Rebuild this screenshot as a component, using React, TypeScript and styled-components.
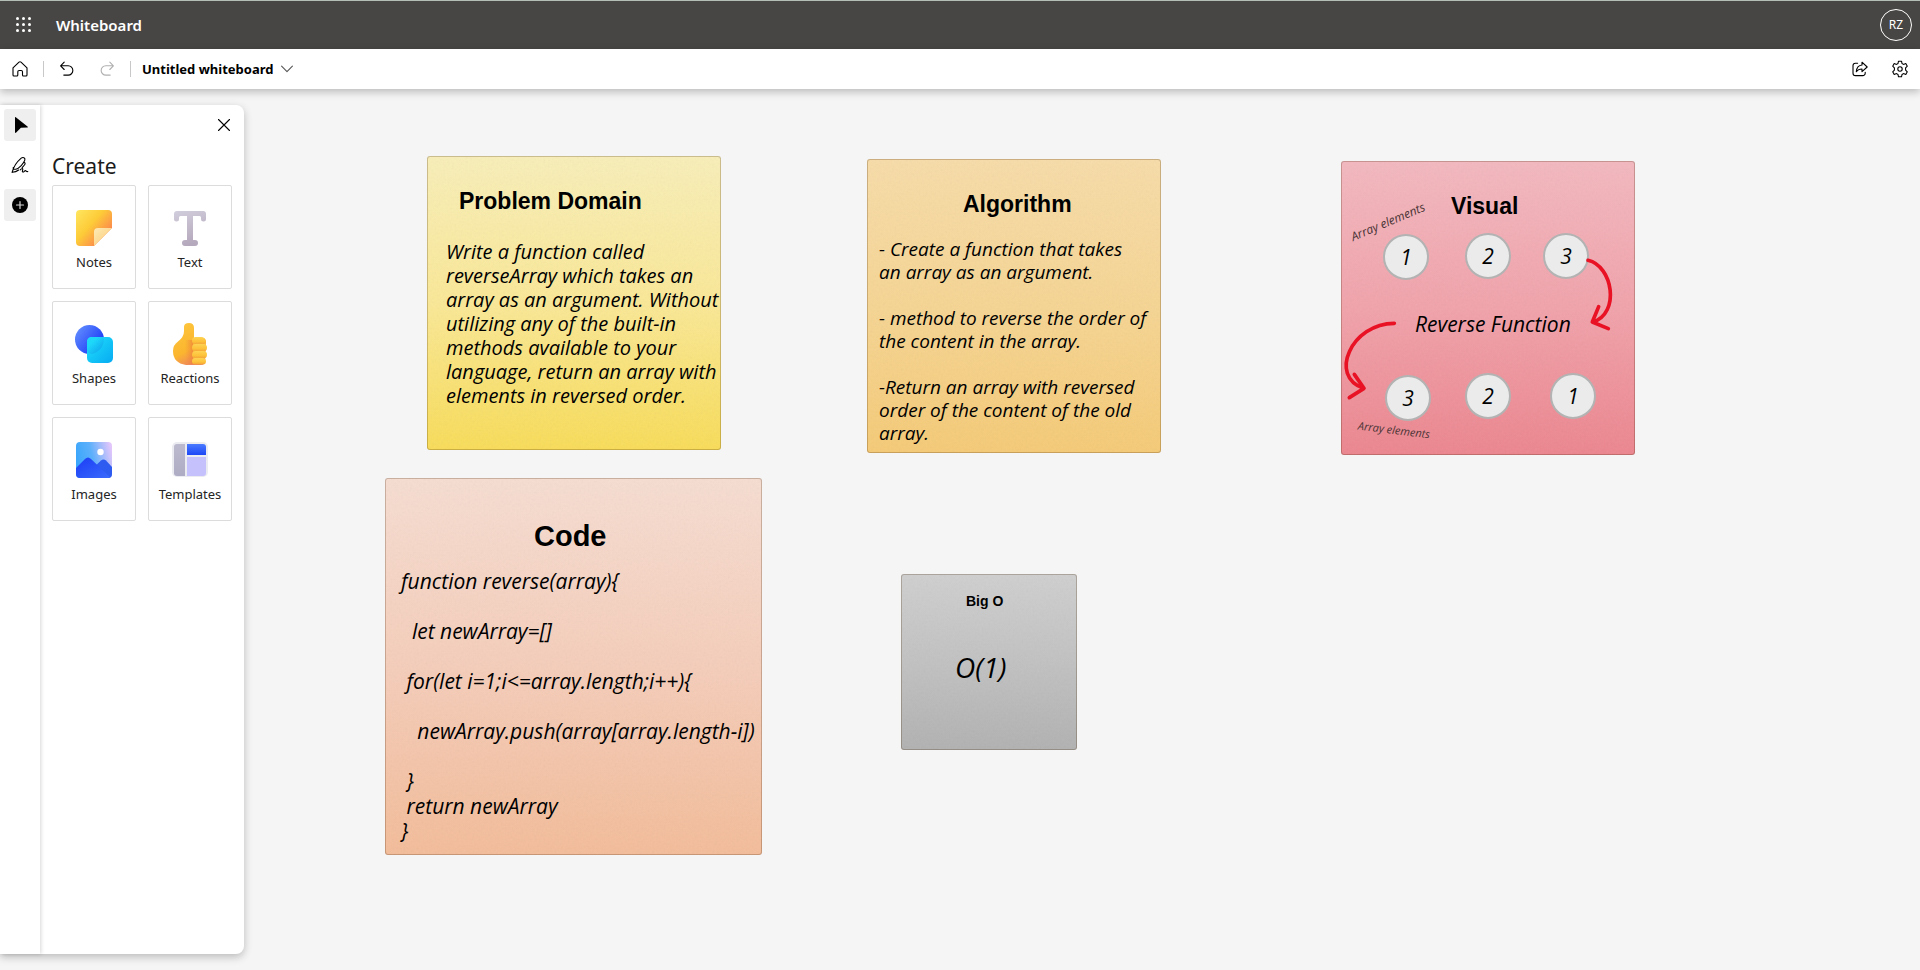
import React from "react";
import styled, { createGlobalStyle } from "styled-components";

const GlobalStyle = createGlobalStyle`
  *, *::before, *::after { box-sizing: border-box; }
  body {
    margin: 0;
    background: #f5f5f5;
    color: #000;
    font-family: "Noto Sans", "Open Sans", sans-serif;
  }
  button { font: inherit; color: inherit; }
`;

/* ---------- Page frame ---------- */

const Page = styled.div`
  min-height: 100vh;
  display: flex;
  flex-direction: column;
`;

const SuiteBar = styled.header`
  display: flex;
  align-items: center;
  height: 49px;
  padding: 0 8px;
  border-top: 1px solid #b4beb7;
  background: #484644;
  color: #fff;
`;

const BrandName = styled.span`
  margin-left: 16px;
  flex: 1;
  font-size: 15px;
  line-height: 24px;
  font-weight: 600;
`;

const IconButton = styled.button<{ $muted?: boolean }>`
  display: flex;
  align-items: center;
  justify-content: center;
  width: 32px;
  height: 32px;
  padding: 0;
  border: 0;
  border-radius: 3px;
  background: transparent;
  color: ${(p) => (p.$muted ? "#b0b0b0" : "inherit")};
  cursor: pointer;
`;

const Avatar = styled.button`
  width: 32px;
  height: 32px;
  padding: 0;
  border: 1px solid #fff;
  border-radius: 50%;
  background: transparent;
  font-size: 12px;
  line-height: 28px;
  cursor: pointer;
`;

const Toolbar = styled.nav`
  position: relative;
  z-index: 2;
  display: flex;
  align-items: center;
  height: 40px;
  padding: 0 4px;
  background: #fff;
  box-shadow: 0 3px 8px rgba(0, 0, 0, 0.24);
`;

const Divider = styled.span`
  width: 1px;
  height: 16px;
  margin: 0 7px;
  background: #c8c8c8;
`;

const BoardName = styled.button`
  display: flex;
  align-items: center;
  gap: 8px;
  margin-right: auto;
  padding: 0 4px;
  border: 0;
  background: transparent;
  font-size: 13px;
  line-height: 24px;
  font-weight: 700;
  cursor: pointer;
`;

const ToolGroup = styled.div`
  display: flex;
  gap: 8px;
`;

const Main = styled.main`
  flex: 1;
  display: flex;
`;

/* ---------- Side panel ---------- */

const SidePanel = styled.aside`
  position: relative;
  z-index: 1;
  flex: none;
  display: flex;
  margin: 16px 0;
  border-radius: 0 8px 8px 0;
  background: #fff;
  box-shadow: 0 3px 8px rgba(0, 0, 0, 0.24);
`;

const Rail = styled.div`
  display: flex;
  flex-direction: column;
  gap: 8px;
  width: 40px;
  padding: 4px;
  box-shadow: 1px 0 4px rgba(0, 0, 0, 0.16);
`;

const RailButton = styled(IconButton)<{ $active?: boolean }>`
  background: ${(p) => (p.$active ? "#efefef" : "transparent")};
`;

const CreatePane = styled.section`
  width: 204px;
  padding: 4px 12px 12px;
`;

const PaneTop = styled.div`
  display: flex;
  justify-content: flex-end;
  margin: 0 -8px;
`;

const PaneTitle = styled.h2`
  margin: 11px 0 5px;
  font-size: 21px;
  line-height: 28px;
  font-weight: 400;
  color: #1b1b1b;
`;

const TileGrid = styled.div`
  display: grid;
  grid-template-columns: 1fr 1fr;
  gap: 12px;
`;

const Tile = styled.button`
  display: flex;
  flex-direction: column;
  align-items: center;
  gap: 3px;
  height: 104px;
  padding: 20px 0 0;
  border: 1px solid #dcdcdc;
  border-radius: 2px;
  background: #fff;
  font-size: 13px;
  line-height: 18px;
  color: #242424;
  cursor: pointer;
`;

/* ---------- Whiteboard canvas ---------- */

const Canvas = styled.div`
  position: relative;
  flex: 1;
  min-height: 800px;
  overflow: hidden;
`;

const tones = {
  yellow: ["#f8eeb8", "#fae896", "#f8dc58"],
  amber: ["#f7dca8", "#f6d593", "#f5ca76"],
  pink: ["#f3b8bf", "#f1a2aa", "#ec858e"],
  peach: ["#f6ddd1", "#f5cdba", "#f3bc99"],
  gray: ["#cfcfcf", "#c1c1c1", "#b1b1b1"],
};

const Note = styled.article<{
  $x: number;
  $y: number;
  $size: number;
  $top: number;
  $tone: keyof typeof tones;
}>`
  position: absolute;
  left: ${(p) => p.$x}px;
  top: ${(p) => p.$y}px;
  width: ${(p) => p.$size}px;
  height: ${(p) => p.$size}px;
  padding-top: ${(p) => p.$top}px;
  border: 1px solid rgba(60, 30, 0, 0.24);
  border-radius: 3px;
  background: linear-gradient(${(p) => tones[p.$tone].join(", ")}) border-box;
`;

const NoteTitle = styled.h3<{ $size: "small" | "medium" | "large"; $indent: number }>`
  position: relative;
  margin: 0;
  padding-left: ${(p) => p.$indent}px;
  font-family: "Liberation Sans", Arial, sans-serif;
  font-weight: 700;
  font-size: ${(p) => ({ small: 14, medium: 23, large: 29 })[p.$size]}px;
  line-height: ${(p) => ({ small: 20, medium: 28, large: 36 })[p.$size]}px;
`;

const Handwriting = styled.p<{ $font: number; $line: number; $indent: number; $gap: number }>`
  position: relative;
  margin: ${(p) => p.$gap}px 0 0;
  padding-left: ${(p) => p.$indent}px;
  font-family: "Ink Free", "Segoe Print", "Open Sans", cursive;
  font-style: italic;
  font-size: ${(p) => p.$font}px;
  line-height: ${(p) => p.$line}px;
  white-space: pre;
`;

const GrainLayer = styled.svg`
  position: absolute;
  inset: 0;
  width: 100%;
  height: 100%;
  opacity: 0.08;
  pointer-events: none;
`;

const Token = styled.span<{ $x: number; $y: number }>`
  position: absolute;
  left: ${(p) => p.$x}px;
  top: ${(p) => p.$y}px;
  width: 46px;
  height: 46px;
  border: 2px solid #b3b3b3;
  border-radius: 50%;
  background: #ebebeb;
  font-family: "Ink Free", "Segoe Print", "Open Sans", cursive;
  font-style: italic;
  font-size: 21px;
  line-height: 42px;
  text-align: center;
`;

const Caption = styled.span<{ $x: number; $y: number; $angle: number; $font: number }>`
  position: absolute;
  left: ${(p) => p.$x}px;
  top: ${(p) => p.$y}px;
  width: 80px;
  text-align: center;
  transform: rotate(${(p) => p.$angle}deg);
  font-family: "Ink Free", "Segoe Print", "Open Sans", cursive;
  font-style: italic;
  font-size: ${(p) => p.$font}px;
  line-height: 16px;
  color: #4a3436;
  white-space: nowrap;
`;

const ArrowLayer = styled.svg`
  position: absolute;
  left: -1px;
  top: -1px;
`;

/* ---------- Icons ---------- */

const line = {
  fill: "none",
  stroke: "currentColor",
  strokeWidth: 1.1,
  strokeLinecap: "round" as const,
  strokeLinejoin: "round" as const,
};

const WaffleIcon = () => (
  <svg width="16" height="16" viewBox="0 0 16 16" fill="currentColor">
    {[1.5, 7.5, 13.5].flatMap((y) =>
      [1.5, 7.5, 13.5].map((x) => <circle key={`${x}-${y}`} cx={x} cy={y} r="1.5" />),
    )}
  </svg>
);

const HomeIcon = () => (
  <svg width="16" height="16" viewBox="0 0 16 16" {...line}>
    <path d="M1 6.9 7 1.1q1-.8 2 0l6 5.8V14q0 1-1 1h-2.6q-.9 0-.9-1v-3.2q0-1.3-1.3-1.3H7.1q-1.3 0-1.3 1.3V14q0 1-.9 1H2q-1 0-1-1z" />
  </svg>
);

const UndoIcon = () => (
  <svg width="16" height="16" viewBox="0 0 16 16" {...line}>
    <path d="M5.2 1.2 1.6 4.8l3.6 3.7M1.8 4.8h7.4a4.6 4.6 0 0 1 0 9.3H4.8" />
  </svg>
);

const RedoIcon = () => (
  <svg width="16" height="16" viewBox="0 0 16 16" {...line}>
    <path d="m10.8 1.2 3.6 3.6-3.6 3.7M14.2 4.8H6.8a4.6 4.6 0 0 0 0 9.3h4.4" />
  </svg>
);

const ChevronIcon = () => (
  <svg width="12" height="12" viewBox="0 0 12 12" {...line} stroke="#555">
    <path d="m.6 3.2 5.4 5.4 5.4-5.4" />
  </svg>
);

const ShareIcon = () => (
  <svg width="16" height="16" viewBox="0 0 16 16" {...line}>
    <path d="M5.6 2.2H3.4A2.4 2.4 0 0 0 1 4.6v7.6a2.4 2.4 0 0 0 2.4 2.4h7.4a2.4 2.4 0 0 0 2.4-2.4v-1" />
    <path d="M10 1.2 15.2 6 10 10.6V8c-2.6 0-4.3.8-5.700 2.7C4.6 7 6.4 4.300 10 4z" />
  </svg>
);

const GearIcon = () => (
  <svg width="18" height="18" viewBox="0 0 18 18" {...line}>
    <path d="M7.5 1.2h3l.5 2.300 1.500.9 2.300-.8 1.500 2.600-1.700 1.700v2.200l1.700 1.700-1.500 2.600-2.300-.8-1.500.9-.5 2.300h-3L7 14.500l-1.500-.9-2.300.8-1.500-2.600 1.700-1.700V7.900L1.700 6.200l1.500-2.600 2.300.8L7 3.500z" />
    <circle cx="9" cy="9" r="2.2" />
  </svg>
);

const PointerIcon = () => (
  <svg width="16" height="18" viewBox="0 0 16 18" fill="currentColor">
    <path d="M3 1.6q0-1 .8-.4l11.700 9.400q.8.8-.3.9l-6.300.3-4.700 4.800q-1.200.9-1.200-.5z" />
  </svg>
);

const PenIcon = () => (
  <svg width="18" height="18" viewBox="0 0 18 18" {...line}>
    <path d="M1.200 16.200C2.200 12 6 5.800 10.200 2.200c1.800-1.500 4.400-.3 3.600 2C12.800 7.300 8.300 12.400 4.800 13.200c-1.600.3-3-.2-2.600-1.600" />
    <path d="M1.200 16.200c2.600 0 4.800-.8 6.400-2.200M13.200 6.200c1.300.6 1 1.800.2 2.800l-2.200 2.600" />
    <path d="M9.200 13.800c1.200-1.300 2.400-1.500 2.600-.6.200 1-1.200 2.500.1 2.800 1.100.2 1.500-1.400 2.500-1.400s.8 1.400 2.400.9" />
  </svg>
);

const AddIcon = () => (
  <svg width="16" height="16" viewBox="0 0 16 16">
    <circle cx="8" cy="8" r="8" fill="currentColor" />
    <path d="M8 4.500v7M4.500 8h7" stroke="#d8d8d8" strokeWidth="1.2" strokeLinecap="round" />
  </svg>
);

const CloseIcon = () => (
  <svg width="12" height="12" viewBox="0 0 12 12" {...line}>
    <path d="m.5.5 11 11M11.500.5l-11 11" />
  </svg>
);

const NotesArt = () => (
  <svg width="44" height="44" viewBox="0 0 44 44">
    <defs>
      <linearGradient id="noteBody" x1="0.05" y1="0.05" x2="0.9" y2="0.8">
        <stop offset="0" stopColor="#ffe35b" />
        <stop offset="0.45" stopColor="#fdcb38" />
        <stop offset="1" stopColor="#fb7a52" />
      </linearGradient>
      <linearGradient id="noteFold" x1="0" y1="0" x2="0.6" y2="0.6">
        <stop offset="0" stopColor="#fdebb8" />
        <stop offset="1" stopColor="#fcd68a" />
      </linearGradient>
    </defs>
    <path d="M8 4h28a4 4 0 0 1 4 4v14L22 40H8a4 4 0 0 1-4-4V8a4 4 0 0 1 4-4z" fill="url(#noteBody)" />
    <path d="M40 22 22 40V26a4 4 0 0 1 4-4z" fill="url(#noteFold)" />
  </svg>
);

const TextArt = () => (
  <svg width="44" height="44" viewBox="0 0 44 44">
    <defs>
      <linearGradient id="textStem" x1="0" y1="0" x2="0.3" y2="1">
        <stop offset="0" stopColor="#d2cedc" />
        <stop offset="1" stopColor="#b5a9bd" />
      </linearGradient>
    </defs>
    <path
      d="M9 5h26a3 3 0 0 1 3 3v5a2.500 2.500 0 0 1-5 0v-1.500q0-1.500-1.500-1.500H25v24h2a3 3 0 0 1 0 6H17a3 3 0 0 1 0-6h2V10h-6.500Q11 10 11 11.500V13a2.500 2.500 0 0 1-5 0V8a3 3 0 0 1 3-3z"
      fill="url(#textStem)"
    />
  </svg>
);

const ShapesArt = () => (
  <svg width="44" height="44" viewBox="0 0 44 44">
    <defs>
      <linearGradient id="shapeDisc" x1="0.1" y1="0.2" x2="0.9" y2="0.8">
        <stop offset="0" stopColor="#5c86ff" />
        <stop offset="1" stopColor="#1636f4" />
      </linearGradient>
      <linearGradient id="shapeSquare" x1="0" y1="0" x2="1" y2="1">
        <stop offset="0" stopColor="#22e2fb" />
        <stop offset="1" stopColor="#06aaf2" />
      </linearGradient>
      <linearGradient id="shapeLens" x1="0" y1="0" x2="1" y2="1">
        <stop offset="0.3" stopColor="#1ed8fa" />
        <stop offset="1" stopColor="#0b9cec" />
      </linearGradient>
    </defs>
    <circle cx="17.500" cy="17.500" r="14.500" fill="url(#shapeDisc)" />
    <rect x="15" y="15" width="26" height="26" rx="5" fill="url(#shapeSquare)" />
    <path d="M31.700 15a14.500 14.500 0 0 1-13 16.900Q15 30 15 27v-7q0-5 5-5z" fill="url(#shapeLens)" />
  </svg>
);

const ReactionsArt = () => (
  <svg width="44" height="44" viewBox="0 0 44 44">
    <defs>
      <linearGradient id="thumbHand" x1="0.2" y1="0" x2="0.6" y2="1">
        <stop offset="0" stopColor="#fdc63c" />
        <stop offset="0.65" stopColor="#fbb52f" />
        <stop offset="1" stopColor="#ee8560" />
      </linearGradient>
      <linearGradient id="thumbShade" x1="0" y1="0" x2="1" y2="0">
        <stop offset="0" stopColor="#f08a3c" stopOpacity="0" />
        <stop offset="1" stopColor="#ee7f3c" stopOpacity="0.7" />
      </linearGradient>
      <linearGradient id="thumbFinger" x1="0" y1="0" x2="0" y2="1">
        <stop offset="0" stopColor="#fed353" />
        <stop offset="0.6" stopColor="#fdc23a" />
        <stop offset="1" stopColor="#f3a33a" />
      </linearGradient>
    </defs>
    <path
      d="M16 5q0-4 5-4t5 5v10h9q3 0 3 4l-1 19q0 4-4 4H18Q5 41 5 29q0-6 5-9.500 6-4.500 6-10.500z"
      fill="url(#thumbHand)"
    />
    <path d="M17 18h8v24h-8z" fill="url(#thumbShade)" />
    <g fill="url(#thumbFinger)">
      <rect x="24" y="15" width="13" height="7.500" rx="3.700" />
      <rect x="24" y="22" width="15" height="7.500" rx="3.700" />
      <rect x="24" y="29" width="15" height="7.500" rx="3.700" />
      <rect x="24" y="36" width="14" height="6.500" rx="3.200" />
    </g>
  </svg>
);

const ImagesArt = () => (
  <svg width="44" height="44" viewBox="0 0 44 44">
    <defs>
      <linearGradient id="imageSky" x1="0" y1="0.5" x2="1" y2="0.25">
        <stop offset="0" stopColor="#3aa6fb" />
        <stop offset="0.45" stopColor="#5cb0fb" />
        <stop offset="1" stopColor="#e2c6fb" />
      </linearGradient>
      <linearGradient id="imageHill" x1="0" y1="0" x2="1" y2="1">
        <stop offset="0" stopColor="#1a3cf6" />
        <stop offset="1" stopColor="#3c6dfc" />
      </linearGradient>
      <clipPath id="imageFrame">
        <rect x="4" y="4" width="36" height="36" rx="4" />
      </clipPath>
    </defs>
    <g clipPath="url(#imageFrame)">
      <rect x="4" y="4" width="36" height="36" fill="url(#imageSky)" />
      <path d="M20 31 29 22.500q2.500-2 5 0L42 31v11H20z" fill="#2e5bf0" />
      <path d="M3 31 13 21q3-3 6 0l21 20H3z" fill="url(#imageHill)" />
      <circle cx="28.500" cy="14" r="3.200" fill="#fff" />
    </g>
  </svg>
);

const TemplatesArt = () => (
  <svg width="44" height="44" viewBox="0 0 44 44">
    <defs>
      <linearGradient id="templateHead" x1="0" y1="0" x2="0" y2="1">
        <stop offset="0" stopColor="#4a7bff" />
        <stop offset="1" stopColor="#1d47f6" />
      </linearGradient>
      <linearGradient id="templateSide" x1="0" y1="0" x2="0" y2="1">
        <stop offset="0" stopColor="#bcbacd" />
        <stop offset="1" stopColor="#adacc4" />
      </linearGradient>
    </defs>
    <rect x="4" y="4" width="36" height="35" rx="5" fill="#ebebf2" />
    <path d="M9 6h8v32H9a3 3 0 0 1-3-3V9a3 3 0 0 1 3-3z" fill="url(#templateSide)" />
    <path d="M19 6h16a3 3 0 0 1 3 3v8H19z" fill="url(#templateHead)" />
    <path d="M19 19h19v16a3 3 0 0 1-3 3H19z" fill="#c4c1fd" />
  </svg>
);

const Grain = () => (
  <GrainLayer aria-hidden="true">
    <filter id="paperGrain">
      <feTurbulence type="fractalNoise" baseFrequency="0.45" numOctaves="2" seed="4" />
      <feColorMatrix type="saturate" values="0" />
    </filter>
    <rect width="100%" height="100%" filter="url(#paperGrain)" />
  </GrainLayer>
);

/* ---------- Content ---------- */

const tiles = [
  { label: "Notes", Art: NotesArt },
  { label: "Text", Art: TextArt },
  { label: "Shapes", Art: ShapesArt },
  { label: "Reactions", Art: ReactionsArt },
  { label: "Images", Art: ImagesArt },
  { label: "Templates", Art: TemplatesArt },
];

const tokens = [
  { value: "1", x: 41, y: 72 },
  { value: "2", x: 123, y: 71 },
  { value: "3", x: 201, y: 71 },
  { value: "3", x: 43, y: 213 },
  { value: "2", x: 123, y: 211 },
  { value: "1", x: 208, y: 211 },
];

const problemText = `Write a function called
reverseArray which takes an
array as an argument. Without
utilizing any of the built-in
methods available to your
language, return an array with
elements in reversed order.`;

const algorithmText = `- Create a function that takes
an array as an argument.

- method to reverse the order of
the content in the array.

-Return an array with reversed
order of the content of the old
array.`;

const codeText = `function reverse(array){

  let newArray=[]

 for(let i=1;i<=array.length;i++){

   newArray.push(array[array.length-i])

 }
 return newArray
}`;

export default function App() {
  return (
    <Page>
      <GlobalStyle />
      <SuiteBar>
        <IconButton aria-label="App launcher">
          <WaffleIcon />
        </IconButton>
        <BrandName>Whiteboard</BrandName>
        <Avatar aria-label="Account">RZ</Avatar>
      </SuiteBar>

      <Toolbar>
        <IconButton aria-label="Home">
          <HomeIcon />
        </IconButton>
        <Divider />
        <ToolGroup>
          <IconButton aria-label="Undo">
            <UndoIcon />
          </IconButton>
          <IconButton aria-label="Redo" $muted>
            <RedoIcon />
          </IconButton>
        </ToolGroup>
        <Divider />
        <BoardName>
          Untitled whiteboard
          <ChevronIcon />
        </BoardName>
        <ToolGroup>
          <IconButton aria-label="Share">
            <ShareIcon />
          </IconButton>
          <IconButton aria-label="Settings">
            <GearIcon />
          </IconButton>
        </ToolGroup>
      </Toolbar>

      <Main>
        <SidePanel>
          <Rail>
            <RailButton aria-label="Select" $active>
              <PointerIcon />
            </RailButton>
            <RailButton aria-label="Inking">
              <PenIcon />
            </RailButton>
            <RailButton aria-label="Create" $active>
              <AddIcon />
            </RailButton>
          </Rail>
          <CreatePane>
            <PaneTop>
              <IconButton aria-label="Close">
                <CloseIcon />
              </IconButton>
            </PaneTop>
            <PaneTitle>Create</PaneTitle>
            <TileGrid>
              {tiles.map(({ label, Art }) => (
                <Tile key={label}>
                  <Art />
                  {label}
                </Tile>
              ))}
            </TileGrid>
          </CreatePane>
        </SidePanel>

        <Canvas>
          <Note $x={183} $y={67} $size={294} $top={30} $tone="yellow">
            <Grain />
            <NoteTitle $size="medium" $indent={31}>
              Problem Domain
            </NoteTitle>
            <Handwriting $font={20} $line={24} $indent={18} $gap={25}>
              {problemText}
            </Handwriting>
          </Note>

          <Note $x={623} $y={70} $size={294} $top={30} $tone="amber">
            <Grain />
            <NoteTitle $size="medium" $indent={95}>
              Algorithm
            </NoteTitle>
            <Handwriting $font={19} $line={23} $indent={11} $gap={20}>
              {algorithmText}
            </Handwriting>
          </Note>

          <Note $x={1097} $y={72} $size={294} $top={30} $tone="pink">
            <Grain />
            <NoteTitle $size="medium" $indent={109}>
              Visual
            </NoteTitle>
            <Handwriting $font={21} $line={28} $indent={73} $gap={90}>
              Reverse Function
            </Handwriting>
            {tokens.map((t) => (
              <Token key={`${t.x}-${t.y}`} $x={t.x} $y={t.y}>
                {t.value}
              </Token>
            ))}
            <Caption $x={6} $y={52} $angle={-23} $font={12}>
              Array elements
            </Caption>
            <Caption $x={12} $y={260} $angle={7} $font={11}>
              Array elements
            </Caption>
            <ArrowLayer
              width="294"
              height="294"
              viewBox="34 33 882 882"
              fill="none"
              stroke="#e81224"
              strokeWidth="11"
              strokeLinecap="round"
              strokeLinejoin="round"
            >
              <path d="M775 331C850 348 872 490 790 516M807 470 788 516 836 536" />
              <path d="M194 520C65 520-5 680 102 715M74 673 103 715 59 743" />
            </ArrowLayer>
          </Note>

          <Note $x={141} $y={389} $size={377} $top={39} $tone="peach">
            <Grain />
            <NoteTitle $size="large" $indent={148}>
              Code
            </NoteTitle>
            <Handwriting $font={21} $line={25} $indent={15} $gap={15}>
              {codeText}
            </Handwriting>
          </Note>

          <Note $x={657} $y={485} $size={176} $top={16} $tone="gray">
            <Grain />
            <NoteTitle $size="small" $indent={64}>
              Big O
            </NoteTitle>
            <Handwriting $font={28} $line={36} $indent={53} $gap={38}>
              O(1)
            </Handwriting>
          </Note>
        </Canvas>
      </Main>
    </Page>
  );
}
